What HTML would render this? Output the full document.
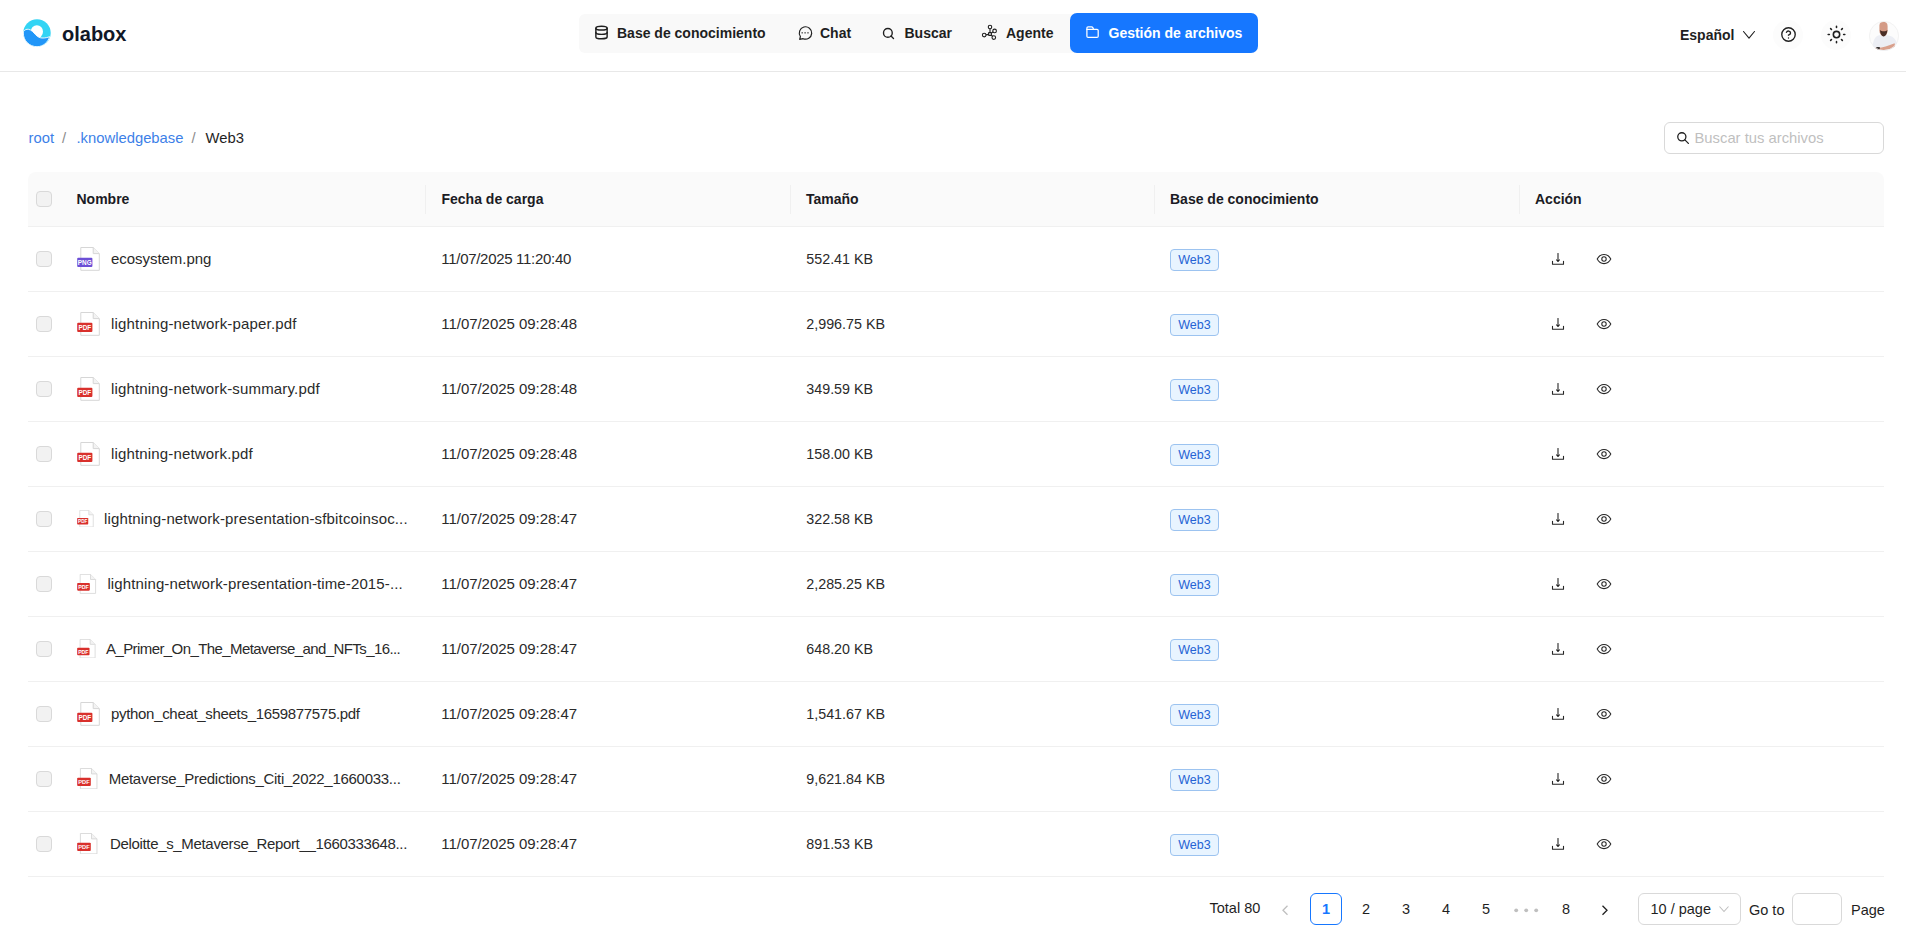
<!DOCTYPE html>
<html>
<head>
<meta charset="utf-8">
<style>
*{box-sizing:border-box;margin:0;padding:0}
html,body{width:1906px;height:946px;overflow:hidden;background:#fff}
body{font-family:"Liberation Sans",sans-serif;color:#1f1f1f;position:relative}
.abs{position:absolute}
.t{position:absolute;white-space:nowrap;line-height:1}
svg{display:block}
/* header */
#hdr{position:absolute;left:0;top:0;width:1906px;height:72px;border-bottom:1px solid #e8e8e8}
#nav{position:absolute;left:579px;top:13.5px;width:679px;height:39px;background:#f9f9f9;border-radius:6px}
#act{position:absolute;left:1070px;top:13px;width:188px;height:40px;background:#1677ff;border-radius:7px}
.nt{font-size:14px;font-weight:700;color:#1f1f1f}
/* table */
#thead{position:absolute;left:28px;top:172px;width:1856px;height:55px;background:#fafafa;border-bottom:1px solid #f0f0f0;border-radius:8px 8px 0 0}
.sep{position:absolute;top:185px;width:1px;height:29px;background:#f0f0f0}
.th{font-size:14px;font-weight:700;color:#1b1b24}
.row{position:absolute;left:28px;width:1856px;height:65px;border-bottom:1px solid #f0f0f0}
.cb{position:absolute;width:16px;height:16px;border:1px solid #d9d9d9;border-radius:4px;background:#f2f2f2}
.td{font-size:15px;color:#2a2a2a}
.tag{position:absolute;width:49px;height:22px;border:1px solid #9cc3f0;background:#e8f4ff;border-radius:4px;color:#2563d4;font-size:12.5px;line-height:20px;text-align:center}
.pg{position:absolute;top:893px;height:32px;font-size:14.5px;line-height:32px;text-align:center;color:#1f1f1f}
</style>
</head>
<body>
<div id="hdr">
  <!-- logo -->
  <svg class="abs" style="left:23px;top:19px" width="28" height="28" viewBox="0 0 28 28">
    <circle cx="14" cy="14" r="13.7" fill="#33d4f4"/>
    <ellipse cx="13.9" cy="12.6" rx="6.1" ry="6.4" fill="#fff"/>
    <path d="M0.5 12.6 C1.6 10.8 3.5 10 5.5 10.3 C8.5 10.8 10.5 13.5 12.6 15.7 C14.5 17.7 16.5 18.9 19 19 C22 19.1 24.8 18.5 26.6 17.6 C25 23.5 20 27.7 14 27.7 C6.4 27.7 0.3 21.6 0.3 14 C0.3 13.5 0.4 13 0.5 12.6 Z" fill="#2196f8" stroke="#fff" stroke-width="0.9"/>
  </svg>
  <div class="t" style="left:62px;top:24px;font-size:20px;font-weight:700;color:#111827">olabox</div>

  <div id="nav"></div>
  <div id="act"></div>
  <!-- database icon -->
  <svg class="abs" style="left:594px;top:25px" width="15" height="15" viewBox="0 0 24 24" fill="none" stroke="#1f1f1f" stroke-width="2.3" stroke-linecap="round" stroke-linejoin="round"><ellipse cx="12" cy="5" rx="9" ry="3"/><path d="M3 5V19A9 3 0 0 0 21 19V5"/><path d="M3 12A9 3 0 0 0 21 12"/></svg>
  <div class="t nt" style="left:617px;top:26px">Base de conocimiento</div>
  <!-- chat icon -->
  <svg class="abs" style="left:797px;top:25px" width="16" height="16" viewBox="0 0 16 16" fill="none" stroke="#1f1f1f" stroke-width="1.2" stroke-linejoin="round"><path d="M3.4 11.5A6.2 6.2 0 1 1 6.1 13.7L2.7 14.4Z"/><g fill="#555" stroke="none"><rect x="4.5" y="7.1" width="1.4" height="1.4"/><rect x="7.4" y="7.1" width="1.4" height="1.4"/><rect x="10.3" y="7.1" width="1.4" height="1.4"/></g></svg>
  <div class="t nt" style="left:820px;top:26px">Chat</div>
  <!-- search icon -->
  <svg class="abs" style="left:881px;top:25.5px" width="15" height="15" viewBox="0 0 24 24" fill="none" stroke="#1f1f1f" stroke-width="2.2" stroke-linecap="round" stroke-linejoin="round"><circle cx="11" cy="11" r="7"/><path d="m20 20-4-4"/></svg>
  <div class="t nt" style="left:904.5px;top:26px">Buscar</div>
  <!-- agent icon -->
  <svg class="abs" style="left:981px;top:24px" width="17" height="17" viewBox="0 0 17 17" fill="none" stroke="#1f1f1f" stroke-width="1.1"><circle cx="9" cy="3" r="1.75"/><circle cx="13.6" cy="6.9" r="1.8"/><circle cx="12.8" cy="13.6" r="1.8"/><circle cx="3.2" cy="11.1" r="1.8"/><rect x="7.6" y="8.6" width="2.8" height="2.8" rx="0.5"/><path d="M9 4.8v3.8M10.4 9.1l1.6-1.3M10.2 11.3l1.4 1M7.6 10.4 5 10.9"/></svg>
  <div class="t nt" style="left:1006px;top:26px">Agente</div>
  <!-- folder icon -->
  <svg class="abs" style="left:1085px;top:25px" width="15" height="14" viewBox="0 0 15 14" fill="none" stroke="#fff" stroke-width="1.25" stroke-linecap="round" stroke-linejoin="round"><path d="M1.9 11.2V3.1Q1.9 1.9 3.1 1.9H6.6Q7.4 1.9 7.8 2.6L8.6 4.4H12Q13.2 4.4 13.2 5.6V11.2Q13.2 12.4 12 12.4H3.1Q1.9 12.4 1.9 11.2Z"/><path d="M1.9 4.4H8.6"/></svg>
  <div class="t nt" style="left:1108.5px;top:26px;color:#fff">Gestión de archivos</div>

  <!-- right side -->
  <div class="t nt" style="left:1680px;top:28px">Español</div>
  <svg class="abs" style="left:1742px;top:30px" width="14" height="10" viewBox="0 0 14 10" fill="none" stroke="#1f1f1f" stroke-width="1.1" stroke-linecap="round" stroke-linejoin="round"><path d="M1.5 1.5 7 8.2 12.5 1.5"/></svg>
  <div class="abs" style="left:1773px;top:20px;width:30px;height:30px;border-radius:50%;background:#fcfcfc"></div>
  <svg class="abs" style="left:1779.5px;top:26px" width="17" height="17" viewBox="0 0 24 24" fill="none" stroke="#1f1f1f" stroke-width="1.9" stroke-linecap="round" stroke-linejoin="round"><circle cx="12" cy="12" r="9.5"/><path d="M9.1 9a3 3 0 0 1 5.8 1c0 2-3 3-3 3"/><path d="M12 17h.01"/></svg>
  <div class="abs" style="left:1821px;top:20px;width:30px;height:30px;border-radius:50%;background:#fcfcfc"></div>
  <svg class="abs" style="left:1826.5px;top:25.3px" width="19" height="19" viewBox="0 0 24 24" fill="none" stroke="#1f1f1f" stroke-width="2" stroke-linecap="round" stroke-linejoin="round"><circle cx="12" cy="12" r="4"/><path d="M12 1.5v1.5M12 21v1.5M4.6 4.6l1.06 1.06M18.3 18.3l1.06 1.06M1.5 12H3M21 12h1.5M5.66 18.34 4.6 19.4M19.4 4.6l-1.06 1.06"/></svg>
  <!-- avatar -->
  <svg class="abs" style="left:1869px;top:21px" width="30" height="30" viewBox="0 0 30 30">
    <defs><clipPath id="av"><circle cx="15" cy="15" r="15"/></clipPath></defs>
    <g clip-path="url(#av)">
      <rect width="30" height="30" fill="#fcfcfc"/>
      <path d="M3.5 30 C3.5 22 4.5 16 10 14.2 L19 14.2 C25.5 15.5 28.8 20 29.5 30 Z" fill="#eceef4"/>
      <path d="M10.4 4.5 C10.4 1.8 12.2 0.8 14.4 0.8 C16.8 0.8 18.6 2 18.6 5 L18.6 9.5 C18.6 12.5 16.8 15 14.5 15.2 C12.2 15 10.4 12.5 10.4 9.5 Z" fill="#d49b86"/>
      <path d="M10.9 9 C11.2 13.2 12.9 15.4 14.6 15.6 C16.4 15.4 18.1 13.2 18.4 9 C17.3 10.7 12.3 10.7 10.9 9Z" fill="#4a2f27"/>
      
      <path d="M6 26.5 C11 27.5 18 25.5 25.6 22.2 L26.3 26 C19 29.2 11 29.5 6.2 28.8 Z" fill="#d9a08c"/>
      <rect x="7.2" y="25.9" width="3.6" height="2.5" rx="0.5" fill="#3a3636"/>
    </g>
    <circle cx="15" cy="15" r="14.6" fill="none" stroke="#f0f0f0" stroke-width="0.8"/>
  </svg>
</div>

<!-- breadcrumb -->
<div class="t" style="left:28.5px;top:130.7px;font-size:14.8px;color:#3d7fe8">root</div>
<div class="t" style="left:62px;top:130.7px;font-size:14.8px;color:#8c8c8c">/</div>
<div class="t" style="left:76.5px;top:130.7px;font-size:14.8px;color:#3d7fe8">.knowledgebase</div>
<div class="t" style="left:191.5px;top:130.7px;font-size:14.8px;color:#8c8c8c">/</div>
<div class="t" style="left:205.5px;top:130.7px;font-size:14.8px;color:#1f1f1f">Web3</div>

<!-- search box -->
<div class="abs" style="left:1664px;top:122px;width:220px;height:32px;border:1px solid #d9d9d9;border-radius:6px;background:#fff"></div>
<svg class="abs" style="left:1676px;top:130.5px" width="14" height="14" viewBox="0 0 24 24" fill="none" stroke="#1f1f1f" stroke-width="2.2" stroke-linecap="round"><circle cx="10" cy="10" r="7"/><path d="m15.2 15.2 6 6"/></svg>
<div class="t" style="left:1694.5px;top:130.7px;font-size:14.8px;color:#bfbfbf">Buscar tus archivos</div>

<!-- table header -->
<div id="thead"></div>
<div class="cb" style="left:36px;top:191px"></div>
<div class="t th" style="left:76.5px;top:192px">Nombre</div>
<div class="sep" style="left:425px"></div>
<div class="t th" style="left:441.5px;top:192px">Fecha de carga</div>
<div class="sep" style="left:790px"></div>
<div class="t th" style="left:806px;top:192px">Tamaño</div>
<div class="sep" style="left:1154px"></div>
<div class="t th" style="left:1170px;top:192px">Base de conocimiento</div>
<div class="sep" style="left:1519px"></div>
<div class="t th" style="left:1535px;top:192px">Acción</div>

<div id="rows">
<div class="row" style="top:227px"></div>
<div class="cb" style="left:36px;top:251px"></div>
<svg class="abs" style="left:76.8px;top:246.50px" width="24" height="24" viewBox="0 0 24 24"><path d="M3.8 0.5H16.2L22.3 6.6V23.3H3.8Z" fill="#fff" stroke="#d6d6d6" stroke-width="1"/><path d="M16.2 0.5V6.6H22.3" fill="#f3f3f3" stroke="#d6d6d6" stroke-width="1"/><rect x="0.2" y="10.8" width="15.2" height="9.2" rx="1" fill="#6c4fd6"/><text x="7.8" y="18.2" font-family="Liberation Sans" font-weight="700" font-size="6.4" fill="#fff" text-anchor="middle">PNG</text></svg>
<div class="t td" style="left:111px;top:251.2px;letter-spacing:-0.042px">ecosystem.png</div>
<div class="t td" style="left:441.3px;top:251.2px;letter-spacing:-0.300px">11/07/2025 11:20:40</div>
<div class="t td" style="left:806.3px;top:251.6px;font-size:14.3px">552.41 KB</div>
<div class="tag" style="left:1170px;top:249px">Web3</div>
<svg class="abs" style="left:1551px;top:252px" width="14" height="14" viewBox="0 0 14 14" fill="none" stroke="#262626" stroke-width="1.1" stroke-linecap="round" stroke-linejoin="round"><path d="M7 1.6V9"/><path d="M5.6 7.9 7 9.3 8.4 7.9" fill="#1f1f1f"/><path d="M1.5 9.2V12.3H12.5V9.2"/></svg>
<svg class="abs" style="left:1596px;top:251px" width="16" height="16" viewBox="0 0 16 16" fill="none" stroke="#262626" stroke-width="1.05"><path d="M1.2 8C2.8 5 5.2 3.4 8 3.4S13.2 5 14.8 8C13.2 11 10.8 12.6 8 12.6S2.8 11 1.2 8Z"/><circle cx="8" cy="8" r="2.2"/></svg>
<div class="row" style="top:292px"></div>
<div class="cb" style="left:36px;top:316px"></div>
<svg class="abs" style="left:76.8px;top:311.50px" width="24" height="24" viewBox="0 0 24 24"><path d="M3.8 0.5H16.2L22.3 6.6V23.3H3.8Z" fill="#fff" stroke="#d6d6d6" stroke-width="1"/><path d="M16.2 0.5V6.6H22.3" fill="#f3f3f3" stroke="#d6d6d6" stroke-width="1"/><rect x="0.2" y="10.8" width="15.2" height="9.2" rx="1" fill="#d9302c"/><text x="7.8" y="18.2" font-family="Liberation Sans" font-weight="700" font-size="6.4" fill="#fff" text-anchor="middle">PDF</text></svg>
<div class="t td" style="left:111px;top:316.2px;letter-spacing:0.173px">lightning-network-paper.pdf</div>
<div class="t td" style="left:441.3px;top:316.2px;letter-spacing:-0.044px">11/07/2025 09:28:48</div>
<div class="t td" style="left:806.3px;top:316.6px;font-size:14.3px">2,996.75 KB</div>
<div class="tag" style="left:1170px;top:314px">Web3</div>
<svg class="abs" style="left:1551px;top:317px" width="14" height="14" viewBox="0 0 14 14" fill="none" stroke="#262626" stroke-width="1.1" stroke-linecap="round" stroke-linejoin="round"><path d="M7 1.6V9"/><path d="M5.6 7.9 7 9.3 8.4 7.9" fill="#1f1f1f"/><path d="M1.5 9.2V12.3H12.5V9.2"/></svg>
<svg class="abs" style="left:1596px;top:316px" width="16" height="16" viewBox="0 0 16 16" fill="none" stroke="#262626" stroke-width="1.05"><path d="M1.2 8C2.8 5 5.2 3.4 8 3.4S13.2 5 14.8 8C13.2 11 10.8 12.6 8 12.6S2.8 11 1.2 8Z"/><circle cx="8" cy="8" r="2.2"/></svg>
<div class="row" style="top:357px"></div>
<div class="cb" style="left:36px;top:381px"></div>
<svg class="abs" style="left:76.8px;top:376.50px" width="24" height="24" viewBox="0 0 24 24"><path d="M3.8 0.5H16.2L22.3 6.6V23.3H3.8Z" fill="#fff" stroke="#d6d6d6" stroke-width="1"/><path d="M16.2 0.5V6.6H22.3" fill="#f3f3f3" stroke="#d6d6d6" stroke-width="1"/><rect x="0.2" y="10.8" width="15.2" height="9.2" rx="1" fill="#d9302c"/><text x="7.8" y="18.2" font-family="Liberation Sans" font-weight="700" font-size="6.4" fill="#fff" text-anchor="middle">PDF</text></svg>
<div class="t td" style="left:111px;top:381.2px;letter-spacing:0.164px">lightning-network-summary.pdf</div>
<div class="t td" style="left:441.3px;top:381.2px;letter-spacing:-0.044px">11/07/2025 09:28:48</div>
<div class="t td" style="left:806.3px;top:381.6px;font-size:14.3px">349.59 KB</div>
<div class="tag" style="left:1170px;top:379px">Web3</div>
<svg class="abs" style="left:1551px;top:382px" width="14" height="14" viewBox="0 0 14 14" fill="none" stroke="#262626" stroke-width="1.1" stroke-linecap="round" stroke-linejoin="round"><path d="M7 1.6V9"/><path d="M5.6 7.9 7 9.3 8.4 7.9" fill="#1f1f1f"/><path d="M1.5 9.2V12.3H12.5V9.2"/></svg>
<svg class="abs" style="left:1596px;top:381px" width="16" height="16" viewBox="0 0 16 16" fill="none" stroke="#262626" stroke-width="1.05"><path d="M1.2 8C2.8 5 5.2 3.4 8 3.4S13.2 5 14.8 8C13.2 11 10.8 12.6 8 12.6S2.8 11 1.2 8Z"/><circle cx="8" cy="8" r="2.2"/></svg>
<div class="row" style="top:422px"></div>
<div class="cb" style="left:36px;top:446px"></div>
<svg class="abs" style="left:76.8px;top:441.50px" width="24" height="24" viewBox="0 0 24 24"><path d="M3.8 0.5H16.2L22.3 6.6V23.3H3.8Z" fill="#fff" stroke="#d6d6d6" stroke-width="1"/><path d="M16.2 0.5V6.6H22.3" fill="#f3f3f3" stroke="#d6d6d6" stroke-width="1"/><rect x="0.2" y="10.8" width="15.2" height="9.2" rx="1" fill="#d9302c"/><text x="7.8" y="18.2" font-family="Liberation Sans" font-weight="700" font-size="6.4" fill="#fff" text-anchor="middle">PDF</text></svg>
<div class="t td" style="left:111px;top:446.2px;letter-spacing:0.165px">lightning-network.pdf</div>
<div class="t td" style="left:441.3px;top:446.2px;letter-spacing:-0.044px">11/07/2025 09:28:48</div>
<div class="t td" style="left:806.3px;top:446.6px;font-size:14.3px">158.00 KB</div>
<div class="tag" style="left:1170px;top:444px">Web3</div>
<svg class="abs" style="left:1551px;top:447px" width="14" height="14" viewBox="0 0 14 14" fill="none" stroke="#262626" stroke-width="1.1" stroke-linecap="round" stroke-linejoin="round"><path d="M7 1.6V9"/><path d="M5.6 7.9 7 9.3 8.4 7.9" fill="#1f1f1f"/><path d="M1.5 9.2V12.3H12.5V9.2"/></svg>
<svg class="abs" style="left:1596px;top:446px" width="16" height="16" viewBox="0 0 16 16" fill="none" stroke="#262626" stroke-width="1.05"><path d="M1.2 8C2.8 5 5.2 3.4 8 3.4S13.2 5 14.8 8C13.2 11 10.8 12.6 8 12.6S2.8 11 1.2 8Z"/><circle cx="8" cy="8" r="2.2"/></svg>
<div class="row" style="top:487px"></div>
<div class="cb" style="left:36px;top:511px"></div>
<svg class="abs" style="left:76.8px;top:509.75px" width="17.5" height="17.5" viewBox="0 0 24 24"><path d="M3.8 0.5H16.2L22.3 6.6V23.3H3.8Z" fill="#fff" stroke="#d6d6d6" stroke-width="1"/><path d="M16.2 0.5V6.6H22.3" fill="#f3f3f3" stroke="#d6d6d6" stroke-width="1"/><rect x="0.2" y="10.8" width="15.2" height="9.2" rx="1" fill="#d9302c"/><text x="7.8" y="18.2" font-family="Liberation Sans" font-weight="700" font-size="6.4" fill="#fff" text-anchor="middle">PDF</text></svg>
<div class="t td" style="left:104px;top:511.2px;letter-spacing:0.151px">lightning-network-presentation-sfbitcoinsoc...</div>
<div class="t td" style="left:441.3px;top:511.2px;letter-spacing:-0.044px">11/07/2025 09:28:47</div>
<div class="t td" style="left:806.3px;top:511.6px;font-size:14.3px">322.58 KB</div>
<div class="tag" style="left:1170px;top:509px">Web3</div>
<svg class="abs" style="left:1551px;top:512px" width="14" height="14" viewBox="0 0 14 14" fill="none" stroke="#262626" stroke-width="1.1" stroke-linecap="round" stroke-linejoin="round"><path d="M7 1.6V9"/><path d="M5.6 7.9 7 9.3 8.4 7.9" fill="#1f1f1f"/><path d="M1.5 9.2V12.3H12.5V9.2"/></svg>
<svg class="abs" style="left:1596px;top:511px" width="16" height="16" viewBox="0 0 16 16" fill="none" stroke="#262626" stroke-width="1.05"><path d="M1.2 8C2.8 5 5.2 3.4 8 3.4S13.2 5 14.8 8C13.2 11 10.8 12.6 8 12.6S2.8 11 1.2 8Z"/><circle cx="8" cy="8" r="2.2"/></svg>
<div class="row" style="top:552px"></div>
<div class="cb" style="left:36px;top:576px"></div>
<svg class="abs" style="left:76.8px;top:573.50px" width="20" height="20" viewBox="0 0 24 24"><path d="M3.8 0.5H16.2L22.3 6.6V23.3H3.8Z" fill="#fff" stroke="#d6d6d6" stroke-width="1"/><path d="M16.2 0.5V6.6H22.3" fill="#f3f3f3" stroke="#d6d6d6" stroke-width="1"/><rect x="0.2" y="10.8" width="15.2" height="9.2" rx="1" fill="#d9302c"/><text x="7.8" y="18.2" font-family="Liberation Sans" font-weight="700" font-size="6.4" fill="#fff" text-anchor="middle">PDF</text></svg>
<div class="t td" style="left:107.4px;top:576.2px;letter-spacing:0.119px">lightning-network-presentation-time-2015-...</div>
<div class="t td" style="left:441.3px;top:576.2px;letter-spacing:-0.044px">11/07/2025 09:28:47</div>
<div class="t td" style="left:806.3px;top:576.6px;font-size:14.3px">2,285.25 KB</div>
<div class="tag" style="left:1170px;top:574px">Web3</div>
<svg class="abs" style="left:1551px;top:577px" width="14" height="14" viewBox="0 0 14 14" fill="none" stroke="#262626" stroke-width="1.1" stroke-linecap="round" stroke-linejoin="round"><path d="M7 1.6V9"/><path d="M5.6 7.9 7 9.3 8.4 7.9" fill="#1f1f1f"/><path d="M1.5 9.2V12.3H12.5V9.2"/></svg>
<svg class="abs" style="left:1596px;top:576px" width="16" height="16" viewBox="0 0 16 16" fill="none" stroke="#262626" stroke-width="1.05"><path d="M1.2 8C2.8 5 5.2 3.4 8 3.4S13.2 5 14.8 8C13.2 11 10.8 12.6 8 12.6S2.8 11 1.2 8Z"/><circle cx="8" cy="8" r="2.2"/></svg>
<div class="row" style="top:617px"></div>
<div class="cb" style="left:36px;top:641px"></div>
<svg class="abs" style="left:76.8px;top:638.75px" width="19.5" height="19.5" viewBox="0 0 24 24"><path d="M3.8 0.5H16.2L22.3 6.6V23.3H3.8Z" fill="#fff" stroke="#d6d6d6" stroke-width="1"/><path d="M16.2 0.5V6.6H22.3" fill="#f3f3f3" stroke="#d6d6d6" stroke-width="1"/><rect x="0.2" y="10.8" width="15.2" height="9.2" rx="1" fill="#d9302c"/><text x="7.8" y="18.2" font-family="Liberation Sans" font-weight="700" font-size="6.4" fill="#fff" text-anchor="middle">PDF</text></svg>
<div class="t td" style="left:106px;top:641.2px;letter-spacing:-0.587px">A_Primer_On_The_Metaverse_and_NFTs_16...</div>
<div class="t td" style="left:441.3px;top:641.2px;letter-spacing:-0.044px">11/07/2025 09:28:47</div>
<div class="t td" style="left:806.3px;top:641.6px;font-size:14.3px">648.20 KB</div>
<div class="tag" style="left:1170px;top:639px">Web3</div>
<svg class="abs" style="left:1551px;top:642px" width="14" height="14" viewBox="0 0 14 14" fill="none" stroke="#262626" stroke-width="1.1" stroke-linecap="round" stroke-linejoin="round"><path d="M7 1.6V9"/><path d="M5.6 7.9 7 9.3 8.4 7.9" fill="#1f1f1f"/><path d="M1.5 9.2V12.3H12.5V9.2"/></svg>
<svg class="abs" style="left:1596px;top:641px" width="16" height="16" viewBox="0 0 16 16" fill="none" stroke="#262626" stroke-width="1.05"><path d="M1.2 8C2.8 5 5.2 3.4 8 3.4S13.2 5 14.8 8C13.2 11 10.8 12.6 8 12.6S2.8 11 1.2 8Z"/><circle cx="8" cy="8" r="2.2"/></svg>
<div class="row" style="top:682px"></div>
<div class="cb" style="left:36px;top:706px"></div>
<svg class="abs" style="left:76.8px;top:701.50px" width="24" height="24" viewBox="0 0 24 24"><path d="M3.8 0.5H16.2L22.3 6.6V23.3H3.8Z" fill="#fff" stroke="#d6d6d6" stroke-width="1"/><path d="M16.2 0.5V6.6H22.3" fill="#f3f3f3" stroke="#d6d6d6" stroke-width="1"/><rect x="0.2" y="10.8" width="15.2" height="9.2" rx="1" fill="#d9302c"/><text x="7.8" y="18.2" font-family="Liberation Sans" font-weight="700" font-size="6.4" fill="#fff" text-anchor="middle">PDF</text></svg>
<div class="t td" style="left:111px;top:706.2px;letter-spacing:-0.315px">python_cheat_sheets_1659877575.pdf</div>
<div class="t td" style="left:441.3px;top:706.2px;letter-spacing:-0.044px">11/07/2025 09:28:47</div>
<div class="t td" style="left:806.3px;top:706.6px;font-size:14.3px">1,541.67 KB</div>
<div class="tag" style="left:1170px;top:704px">Web3</div>
<svg class="abs" style="left:1551px;top:707px" width="14" height="14" viewBox="0 0 14 14" fill="none" stroke="#262626" stroke-width="1.1" stroke-linecap="round" stroke-linejoin="round"><path d="M7 1.6V9"/><path d="M5.6 7.9 7 9.3 8.4 7.9" fill="#1f1f1f"/><path d="M1.5 9.2V12.3H12.5V9.2"/></svg>
<svg class="abs" style="left:1596px;top:706px" width="16" height="16" viewBox="0 0 16 16" fill="none" stroke="#262626" stroke-width="1.05"><path d="M1.2 8C2.8 5 5.2 3.4 8 3.4S13.2 5 14.8 8C13.2 11 10.8 12.6 8 12.6S2.8 11 1.2 8Z"/><circle cx="8" cy="8" r="2.2"/></svg>
<div class="row" style="top:747px"></div>
<div class="cb" style="left:36px;top:771px"></div>
<svg class="abs" style="left:76.8px;top:767.75px" width="21.5" height="21.5" viewBox="0 0 24 24"><path d="M3.8 0.5H16.2L22.3 6.6V23.3H3.8Z" fill="#fff" stroke="#d6d6d6" stroke-width="1"/><path d="M16.2 0.5V6.6H22.3" fill="#f3f3f3" stroke="#d6d6d6" stroke-width="1"/><rect x="0.2" y="10.8" width="15.2" height="9.2" rx="1" fill="#d9302c"/><text x="7.8" y="18.2" font-family="Liberation Sans" font-weight="700" font-size="6.4" fill="#fff" text-anchor="middle">PDF</text></svg>
<div class="t td" style="left:108.7px;top:771.2px;letter-spacing:-0.278px">Metaverse_Predictions_Citi_2022_1660033...</div>
<div class="t td" style="left:441.3px;top:771.2px;letter-spacing:-0.044px">11/07/2025 09:28:47</div>
<div class="t td" style="left:806.3px;top:771.6px;font-size:14.3px">9,621.84 KB</div>
<div class="tag" style="left:1170px;top:769px">Web3</div>
<svg class="abs" style="left:1551px;top:772px" width="14" height="14" viewBox="0 0 14 14" fill="none" stroke="#262626" stroke-width="1.1" stroke-linecap="round" stroke-linejoin="round"><path d="M7 1.6V9"/><path d="M5.6 7.9 7 9.3 8.4 7.9" fill="#1f1f1f"/><path d="M1.5 9.2V12.3H12.5V9.2"/></svg>
<svg class="abs" style="left:1596px;top:771px" width="16" height="16" viewBox="0 0 16 16" fill="none" stroke="#262626" stroke-width="1.05"><path d="M1.2 8C2.8 5 5.2 3.4 8 3.4S13.2 5 14.8 8C13.2 11 10.8 12.6 8 12.6S2.8 11 1.2 8Z"/><circle cx="8" cy="8" r="2.2"/></svg>
<div class="row" style="top:812px"></div>
<div class="cb" style="left:36px;top:836px"></div>
<svg class="abs" style="left:76.8px;top:832.75px" width="21.5" height="21.5" viewBox="0 0 24 24"><path d="M3.8 0.5H16.2L22.3 6.6V23.3H3.8Z" fill="#fff" stroke="#d6d6d6" stroke-width="1"/><path d="M16.2 0.5V6.6H22.3" fill="#f3f3f3" stroke="#d6d6d6" stroke-width="1"/><rect x="0.2" y="10.8" width="15.2" height="9.2" rx="1" fill="#d9302c"/><text x="7.8" y="18.2" font-family="Liberation Sans" font-weight="700" font-size="6.4" fill="#fff" text-anchor="middle">PDF</text></svg>
<div class="t td" style="left:110px;top:836.2px;letter-spacing:-0.334px">Deloitte_s_Metaverse_Report__1660333648...</div>
<div class="t td" style="left:441.3px;top:836.2px;letter-spacing:-0.044px">11/07/2025 09:28:47</div>
<div class="t td" style="left:806.3px;top:836.6px;font-size:14.3px">891.53 KB</div>
<div class="tag" style="left:1170px;top:834px">Web3</div>
<svg class="abs" style="left:1551px;top:837px" width="14" height="14" viewBox="0 0 14 14" fill="none" stroke="#262626" stroke-width="1.1" stroke-linecap="round" stroke-linejoin="round"><path d="M7 1.6V9"/><path d="M5.6 7.9 7 9.3 8.4 7.9" fill="#1f1f1f"/><path d="M1.5 9.2V12.3H12.5V9.2"/></svg>
<svg class="abs" style="left:1596px;top:836px" width="16" height="16" viewBox="0 0 16 16" fill="none" stroke="#262626" stroke-width="1.05"><path d="M1.2 8C2.8 5 5.2 3.4 8 3.4S13.2 5 14.8 8C13.2 11 10.8 12.6 8 12.6S2.8 11 1.2 8Z"/><circle cx="8" cy="8" r="2.2"/></svg>
</div><!--/rows-->

<!-- pagination -->
<div class="t" style="left:1209.5px;top:901px;font-size:14.5px;color:#1f1f1f">Total 80</div>
<svg class="abs" style="left:1280px;top:904px" width="10" height="12" viewBox="0 0 10 12" fill="none" stroke="#bfbfbf" stroke-width="1.3"><path d="M7.5 1.8 3 6.3 7.5 10.8"/></svg>
<div class="pg" style="left:1310px;width:32px;border:1px solid #1677ff;border-radius:6px;color:#1677ff;line-height:30px;font-weight:700">1</div>
<div class="pg" style="left:1350px;width:32px">2</div>
<div class="pg" style="left:1390px;width:32px">3</div>
<div class="pg" style="left:1430px;width:32px">4</div>
<div class="pg" style="left:1470px;width:32px">5</div>
<svg class="abs" style="left:1510px;top:903px" width="32" height="14" viewBox="0 0 32 14" fill="#bfbfbf"><circle cx="6.2" cy="7.3" r="1.9"/><circle cx="16.2" cy="7.3" r="1.9"/><circle cx="26.2" cy="7.3" r="1.9"/></svg>
<div class="pg" style="left:1550px;width:32px">8</div>
<svg class="abs" style="left:1600px;top:904px" width="10" height="12" viewBox="0 0 10 12" fill="none" stroke="#1f1f1f" stroke-width="1.3"><path d="M2.5 1.8 7 6.3 2.5 10.8"/></svg>
<div class="abs" style="left:1638px;top:893px;width:103px;height:32px;border:1px solid #d9d9d9;border-radius:6px"></div>
<div class="t" style="left:1650.5px;top:902px;font-size:14.5px;color:#1f1f1f">10 / page</div>
<svg class="abs" style="left:1718px;top:904px" width="12" height="10" viewBox="0 0 12 10" fill="none" stroke="#bfbfbf" stroke-width="1.1"><path d="M1.5 2.5 6 7.5 10.5 2.5"/></svg>
<div class="t" style="left:1749px;top:903px;font-size:14.5px;color:#1f1f1f">Go to</div>
<div class="abs" style="left:1792px;top:893px;width:50px;height:32px;border:1px solid #d9d9d9;border-radius:6px"></div>
<div class="t" style="left:1851px;top:903px;font-size:14.5px;color:#1f1f1f">Page</div>
</body>
</html>
